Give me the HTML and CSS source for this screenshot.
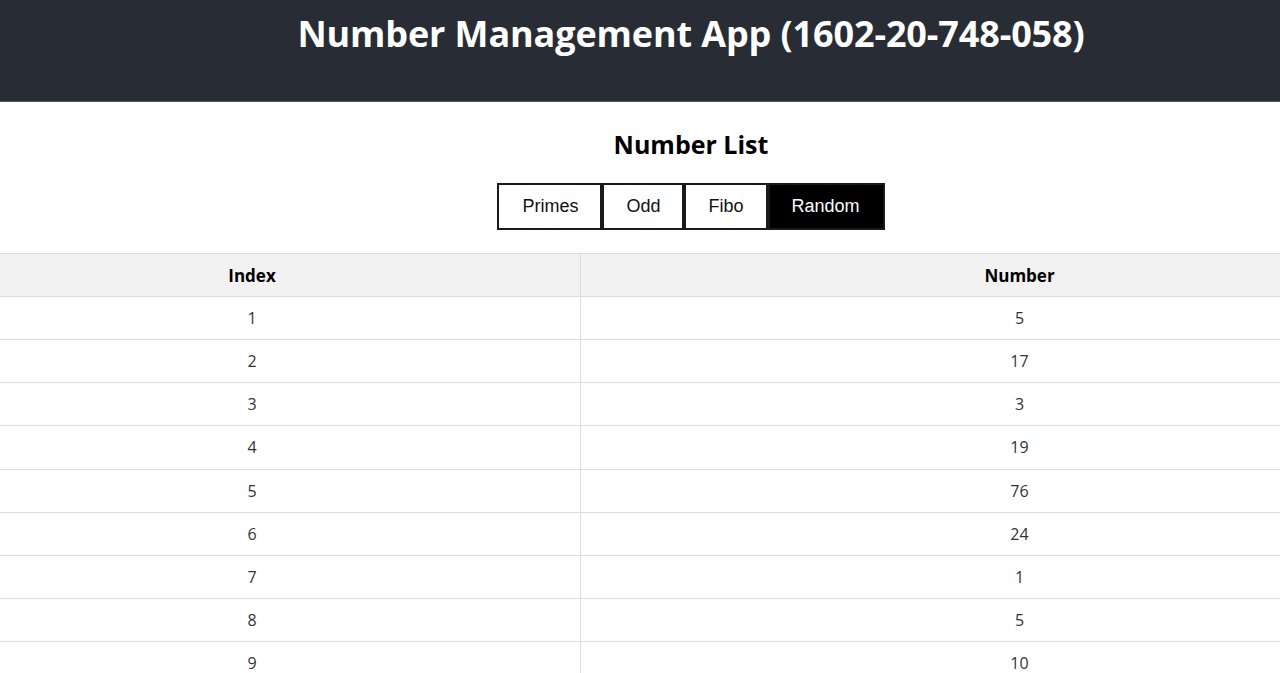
FILE: index.html
```html
<!DOCTYPE html>
<html>
<head>
<meta charset="utf-8">
<link rel="stylesheet" href="styles.css">
</head>
<body>
<div class="app">
  <header class="app-header">
    <h1 class="title">Number Management App (1602-20-748-058)</h1>
  </header>
  <main class="content">
    <h2 class="subtitle">Number List</h2>
    <div class="tabs">
      <button class="tab">Primes</button><button class="tab">Odd</button><button class="tab">Fibo</button><button class="tab active">Random</button>
    </div>
    <table class="numbers">
      <thead>
        <tr><th class="col-index">Index</th><th>Number</th></tr>
      </thead>
      <tbody>
        <tr><td>1</td><td>5</td></tr>
        <tr><td>2</td><td>17</td></tr>
        <tr><td>3</td><td>3</td></tr>
        <tr><td>4</td><td>19</td></tr>
        <tr><td>5</td><td>76</td></tr>
        <tr><td>6</td><td>24</td></tr>
        <tr><td>7</td><td>1</td></tr>
        <tr><td>8</td><td>5</td></tr>
        <tr><td>9</td><td>10</td></tr>
      </tbody>
    </table>
  </main>
</div>
</body>
</html>
```

FILE: styles.css
```css
html, body {
  margin: 0;
  padding: 0;
  overflow: hidden;
  background: #fff;
}

.app {
  width: 1534px;
  margin-left: -76px;
  font-family: "Open Sans", "Noto Sans", sans-serif;
  color: #000;
}

.app-header {
  background: #282c34;
  height: 101px;
  border-bottom: 1px solid #55585e;
  display: flex;
  justify-content: center;
  align-items: flex-start;
}

.title {
  margin: 9px 0 0;
  color: #fff;
  font-size: 36px;
  font-weight: 700;
  line-height: 50px;
  letter-spacing: -0.12px;
}

.content {
  display: flex;
  flex-direction: column;
  align-items: center;
}

.subtitle {
  margin: 25px 0 0;
  font-size: 25px;
  font-weight: 700;
  line-height: 34px;
}

.tabs {
  display: flex;
  margin-top: 22px;
}

.tab {
  font-family: "Liberation Sans", Arial, sans-serif;
  font-size: 18px;
  line-height: 21px;
  padding: 11px 22px;
  height: 47px;
  border: 2px solid #1a1a1a;
  background: #fff;
  color: #111;
  margin: 0;
  cursor: pointer;
}

.tab:first-child {
  padding-left: 23px;
}

.tab:last-child {
  padding-right: 23px;
}

.tab.active {
  background: #000;
  color: #fff;
}

.numbers {
  width: 100%;
  margin-top: 23px;
  border-collapse: collapse;
  font-size: 16px;
}

.numbers th,
.numbers td {
  height: 42px;
  padding: 0;
  text-align: center;
  border-top: 1px solid #dcdcdc;
  border-bottom: 1px solid #dcdcdc;
  color: #333;
}

.numbers td {
  height: 42.15px;
  font-weight: 400;
}

.numbers th {
  background: #f2f2f2;
  font-size: 17px;
  font-weight: 700;
  color: #000;
}

.numbers .col-index {
  width: 656px;
}

.numbers th:first-child,
.numbers td:first-child {
  border-right: 1px solid #dcdcdc;
}
```
